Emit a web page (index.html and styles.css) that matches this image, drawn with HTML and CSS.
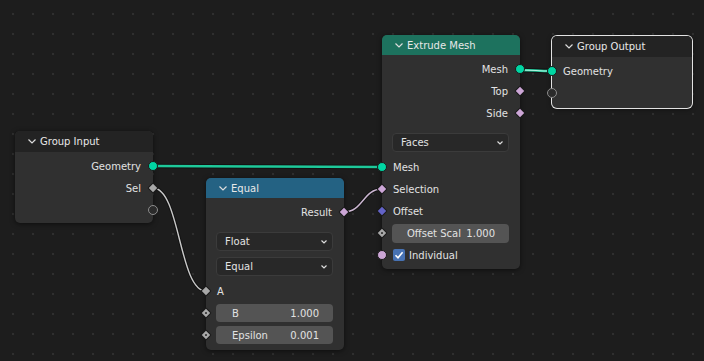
FILE: index.html
```html
<!DOCTYPE html>
<html>
<head>
	<meta charset="utf-8">
	<title>Geometry Nodes</title>
	<link rel="stylesheet" href="styles.css">
</head>
<body>
<div class="canvas">
	<svg class="links" width="704" height="361" viewBox="0 0 704 361">
		<path class="edge" d="M153,166 C268,166 268,167 382,167"/>
		<path class="geo" d="M153,166 C268,166 268,167 382,167"/>
		<path class="edge thin" d="M153,188 C180,188 179,291 206,291"/>
		<path class="float" d="M153,188 C180,188 179,291 206,291"/>
		<path class="edge thin" d="M344,212 C363,212 363,189 382,189"/>
		<path class="bool" d="M344,212 C363,212 363,189 382,189"/>
		<path class="edge" d="M520,70 C536,70 536,71 552,71"/>
		<path class="geo" d="M520,70 C536,70 536,71 552,71"/>
		<path class="hi" d="M520,70 C536,70 536,71 552,71"/>
	</svg>

	<!-- Group Input -->
	<div class="node group-input">
		<div class="node-head head-group">
			<svg class="chev" width="8" height="5" viewBox="0 0 8 5"><polyline points="0.5,0.5 4,4 7.5,0.5"/></svg>
			<span>Group Input</span>
		</div>
		<div class="node-body">
			<div class="row out">Geometry<span class="sock geo-s"></span></div>
			<div class="row out">Sel<span class="sock dia gray-s"></span></div>
			<div class="row out"><span class="sock empty"></span></div>
		</div>
	</div>

	<!-- Equal -->
	<div class="node equal">
		<div class="node-head head-conv">
			<svg class="chev" width="8" height="5" viewBox="0 0 8 5"><polyline points="0.5,0.5 4,4 7.5,0.5"/></svg>
			<span>Equal</span>
		</div>
		<div class="node-body">
			<div class="row out">Result<span class="sock dia pink-s"></span></div>
			<div class="menu first">Float<svg class="mchev" width="6" height="4" viewBox="0 0 6 4"><polyline points="0.5,0.5 3,3 5.5,0.5"/></svg></div>
			<div class="menu">Equal<svg class="mchev" width="6" height="4" viewBox="0 0 6 4"><polyline points="0.5,0.5 3,3 5.5,0.5"/></svg></div>
			<div class="row in gap-a"><span class="sock dia gray-s"></span>A</div>
			<div class="row in"><span class="sock dia dot gray-s"></span>
				<div class="field"><span>B</span><span>1.000</span></div>
			</div>
			<div class="row in"><span class="sock dia dot gray-s"></span>
				<div class="field"><span>Epsilon</span><span>0.001</span></div>
			</div>
		</div>
	</div>

	<!-- Extrude Mesh -->
	<div class="node extrude">
		<div class="node-head head-geo">
			<svg class="chev" width="8" height="5" viewBox="0 0 8 5"><polyline points="0.5,0.5 4,4 7.5,0.5"/></svg>
			<span>Extrude Mesh</span>
		</div>
		<div class="node-body">
			<div class="row out">Mesh<span class="sock geo-s"></span></div>
			<div class="row out">Top<span class="sock dia pink-s"></span></div>
			<div class="row out">Side<span class="sock dia pink-s"></span></div>
			<div class="menu first">Faces<svg class="mchev" width="6" height="4" viewBox="0 0 6 4"><polyline points="0.5,0.5 3,3 5.5,0.5"/></svg></div>
			<div class="row in gap-m"><span class="sock geo-s"></span>Mesh</div>
			<div class="row in"><span class="sock dia pink-s"></span>Selection</div>
			<div class="row in"><span class="sock dia vec-s"></span>Offset</div>
			<div class="row in"><span class="sock dia dot gray-s"></span>
				<div class="field tall"><span>Offset Scal</span><span>1.000</span></div>
			</div>
			<div class="row in"><span class="sock pink-s"></span>
				<span class="check"><svg width="12" height="12" viewBox="0 0 12 12"><polyline points="2.5,6.2 5,8.7 9.6,3.2"/></svg></span>Individual
			</div>
		</div>
	</div>

	<!-- Group Output -->
	<div class="node group-output">
		<div class="node-head head-group">
			<svg class="chev" width="8" height="5" viewBox="0 0 8 5"><polyline points="0.5,0.5 4,4 7.5,0.5"/></svg>
			<span>Group Output</span>
		</div>
		<div class="node-body">
			<div class="row in">Geometry<span class="sock geo-s"></span></div>
			<div class="row in"><span class="sock empty"></span></div>
		</div>
	</div>
</div>
</body>
</html>
```

FILE: styles.css
```css
body { margin: 0; background: #1d1d1d; overflow: hidden; }
.canvas { position: relative; width: 704px; height: 361px; background-color: #1d1d1d;
	background-image: radial-gradient(circle, #2f2f2f 0, #2f2f2f 1px, transparent 1.6px);
	background-size: 20px 20px; background-position: 3px 4px;
	font-family: "DejaVu Sans", sans-serif; font-size: 10px; color: #e2e2e2; }

/* links */
.links { position: absolute; left: 0; top: 0; }
.links path { fill: none; stroke-linecap: round; }
.links .edge { stroke: #121212; stroke-width: 4.5; }
.links .edge.thin { stroke-width: 3.4; }
.links .geo { stroke: #1ec99a; stroke-width: 2.6; }
.links .hi { stroke: #b4f2df; stroke-width: 1.2; }
.links .float { stroke: #c9c9c9; stroke-width: 1.4; }
.links .bool { stroke: #cdb8d3; stroke-width: 1.4; }

/* nodes */
.node { position: absolute; width: 138px; background: #303030; border-radius: 5px; box-shadow: 0 1px 5px rgba(0,0,0,0.55); }
.group-input { left: 15px; top: 131px; }
.equal { left: 206px; top: 178px; }
.extrude { left: 382px; top: 35px; }
.group-output { left: 552px; top: 36px; width: 140px; box-shadow: 0 0 0 1px #e2e2e2, 0 1px 5px rgba(0,0,0,0.55); }

.node-head { height: 20px; display: flex; align-items: center; padding-left: 13px; gap: 4px; border-radius: 5px 5px 0 0; color: #e8e8e8; }
.group-input .node-head, .group-output .node-head { height: 21px; }
.head-group { background: #232323; }
.head-conv { background: #246283; }
.head-geo { background: #1d725e; }
.chev polyline, .mchev polyline { fill: none; stroke: #dcdcdc; stroke-width: 1.2; }

.node-body { padding: 3px 0 2px; }
.equal .node-body { padding-bottom: 4px; }
.extrude .node-body { padding-bottom: 3px; }
.group-output .node-body { padding-bottom: 4px; }

.row { position: relative; height: 22px; display: flex; align-items: center; padding: 0 12px 0 11px; }
.row.out { justify-content: flex-end; }
.gap-a { margin-top: 4px; }
.gap-m { margin-top: 4px; }

/* sockets */
.sock { position: absolute; top: 50%; width: 10px; height: 10px; margin-top: -5px; border-radius: 50%; box-sizing: border-box; border: 1px solid #1a1a1a; }
.out .sock { right: -5px; }
.in .sock { left: -5px; }
.sock.dia { width: 8px; height: 8px; margin-top: -4px; border-radius: 1px; transform: rotate(45deg); }
.out .sock.dia { right: -4px; }
.in .sock.dia { left: -4px; }
.sock.dot::after { content: ""; position: absolute; left: 2px; top: 2px; width: 2px; height: 2px; background: #2a2a2a; border-radius: 50%; }
.geo-s { background: #00d6a3; }
.gray-s { background: #a8a8a8; }
.pink-s { background: #cca6d6; }
.vec-s { background: #6363c7; }
.sock.empty { background: #2b2b2b; border: 1px solid #8c8c8c; }

/* widgets */
.menu { position: relative; height: 19px; box-sizing: border-box; margin: 6px 11px 0 10px; padding-left: 8px; display: flex; align-items: center;
	background: #282828; border: 1px solid #3b3b3b; border-radius: 4px; }
.menu.first { margin-top: 9px; }
.mchev { position: absolute; right: 5px; top: 7px; }
.field { flex: 1; height: 18px; margin-right: -1px; margin-left: -1px; padding: 0 14px 0 16px; display: flex; align-items: center; justify-content: space-between;
	background: #545454; border-radius: 4px; }
.field.tall { height: 19px; padding-left: 15px; }
.check { width: 12px; height: 12px; margin: 0 4px 0 0; background: #4772b3; border-radius: 2px; }
.check polyline { fill: none; stroke: #fff; stroke-width: 1.6; }
```
